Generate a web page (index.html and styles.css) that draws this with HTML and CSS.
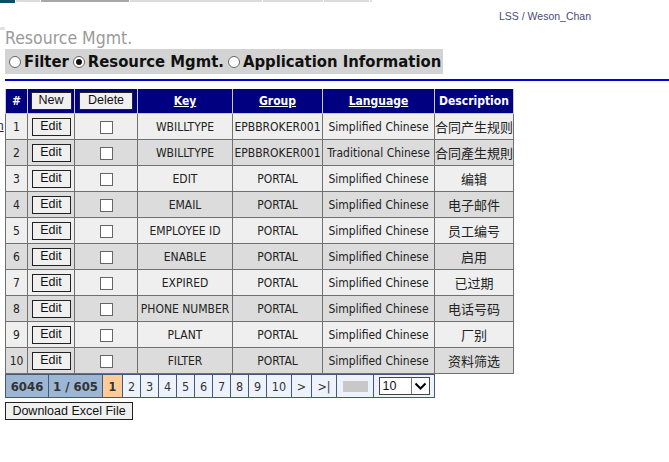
FILE: index.html
```html
<!DOCTYPE html>
<html>
<head>
<meta charset="utf-8">
<link rel="stylesheet" href="styles.css">
</head>
<body>
<div class="topbar">
  <span class="seg s1"></span><span class="seg s2"></span><span class="seg s3"></span><span class="seg s4"></span><span class="seg s5"></span><span class="seg s6"></span><span class="seg s7"></span>
</div>
<div class="userline"><span class="user">LSS / Weson_Chan</span></div>
<div class="page">
  <span class="stub"></span>
  <a class="stray" href="#">n</a>
  <h1 class="title">Resource Mgmt.</h1>
  <div class="radios">
    <label class="opt"><span class="radio"></span>Filter</label>
    <label class="opt"><span class="radio on"></span>Resource Mgmt.</label>
    <label class="opt"><span class="radio"></span>Application Information</label>
  </div>
  <div class="rule"></div>
  <table class="grid">
    <colgroup>
      <col class="c-num"><col class="c-edit"><col class="c-del"><col class="c-key"><col class="c-group"><col class="c-lang"><col class="c-desc">
    </colgroup>
    <thead>
      <tr>
        <th>#</th>
        <th><span class="btn hbtn">New</span></th>
        <th><span class="btn hbtn wide">Delete</span></th>
        <th><a href="#">Key</a></th>
        <th><a href="#">Group</a></th>
        <th><a href="#">Language</a></th>
        <th>Description</th>
      </tr>
    </thead>
    <tbody>
      <tr class="odd"><td class="num">1</td><td><span class="btn">Edit</span></td><td><span class="cb"></span></td><td>WBILLTYPE</td><td>EPBBROKER001</td><td>Simplified Chinese</td><td class="cjk">合同产生规则</td></tr>
      <tr class="even"><td class="num">2</td><td><span class="btn">Edit</span></td><td><span class="cb"></span></td><td>WBILLTYPE</td><td>EPBBROKER001</td><td>Traditional Chinese</td><td class="cjk tc">合同產生規則</td></tr>
      <tr class="odd"><td class="num">3</td><td><span class="btn">Edit</span></td><td><span class="cb"></span></td><td>EDIT</td><td>PORTAL</td><td>Simplified Chinese</td><td class="cjk">编辑</td></tr>
      <tr class="even"><td class="num">4</td><td><span class="btn">Edit</span></td><td><span class="cb"></span></td><td>EMAIL</td><td>PORTAL</td><td>Simplified Chinese</td><td class="cjk">电子邮件</td></tr>
      <tr class="odd"><td class="num">5</td><td><span class="btn">Edit</span></td><td><span class="cb"></span></td><td>EMPLOYEE ID</td><td>PORTAL</td><td>Simplified Chinese</td><td class="cjk">员工编号</td></tr>
      <tr class="even"><td class="num">6</td><td><span class="btn">Edit</span></td><td><span class="cb"></span></td><td>ENABLE</td><td>PORTAL</td><td>Simplified Chinese</td><td class="cjk">启用</td></tr>
      <tr class="odd"><td class="num">7</td><td><span class="btn">Edit</span></td><td><span class="cb"></span></td><td>EXPIRED</td><td>PORTAL</td><td>Simplified Chinese</td><td class="cjk">已过期</td></tr>
      <tr class="even"><td class="num">8</td><td><span class="btn">Edit</span></td><td><span class="cb"></span></td><td>PHONE NUMBER</td><td>PORTAL</td><td>Simplified Chinese</td><td class="cjk">电话号码</td></tr>
      <tr class="odd"><td class="num">9</td><td><span class="btn">Edit</span></td><td><span class="cb"></span></td><td>PLANT</td><td>PORTAL</td><td>Simplified Chinese</td><td class="cjk">厂别</td></tr>
      <tr class="even"><td class="num">10</td><td><span class="btn">Edit</span></td><td><span class="cb"></span></td><td>FILTER</td><td>PORTAL</td><td>Simplified Chinese</td><td class="cjk">资料筛选</td></tr>
    </tbody>
  </table>
  <div class="pager">
    <span class="pc total">6046</span>
    <span class="pc total pages">1 / 605</span>
    <span class="pc cur">1</span>
    <span class="pc">2</span><span class="pc">3</span><span class="pc">4</span><span class="pc">5</span><span class="pc">6</span><span class="pc">7</span><span class="pc">8</span><span class="pc">9</span>
    <span class="pc ten">10</span>
    <span class="pc arrow">&gt;</span>
    <span class="pc arrow2">&gt;|</span>
    <span class="pc blank"><span class="greybox"></span></span>
    <span class="pc selcell"><span class="select"><span class="selval">10</span><span class="selbtn"><svg width="13" height="9" viewBox="0 0 13 9"><path d="M1.5 1.5 L6.5 6.5 L11.5 1.5" fill="none" stroke="#000" stroke-width="2"/></svg></span></span></span>
  </div>
  <div class="dl"><span class="btn dlbtn">Download Excel File</span></div>
</div>
</body>
</html>
```
FILE: styles.css
```css
html, body {
  margin: 0;
  padding: 0;
  background: #fff;
}
body {
  font-family: "DejaVu Sans Condensed", "DejaVu Sans", sans-serif;
  font-size: 12px;
  color: #222;
  position: relative;
}
.topbar {
  display: flex;
  height: 3px;
}
.seg { display: block; height: 2px; margin-right: 1px; background: #dcdcdc; }
.s1 { width: 15px; background: #0d4f6a; height: 3px; }
.s2 { width: 24px; }
.s3 { width: 88px; background: #a8a8a8; }
.s4 { width: 132px; }
.s5 { width: 60px; }
.s6 { width: 45px; }
.s7 { width: 2px; }
.userline {
  display: flex;
  padding-left: 499px;
  height: 24px;
  align-items: center;
}
.user {
  font-family: "Liberation Sans", Arial, sans-serif;
  font-size: 10.5px;
  color: #4a4a78;
  margin-top: 2px;
}
.page {
  padding-left: 5px;
}
.stub {
  position: absolute;
  left: 0;
  top: 27px;
  width: 5px;
  height: 3px;
  background: #e2e2e2;
}
.stray {
  position: absolute;
  left: -3px;
  top: 119px;
  font-family: "Liberation Sans", Arial, sans-serif;
  font-size: 12px;
  color: #1a1a66;
}
.title {
  margin: 0;
  font-weight: normal;
  font-size: 17.5px;
  color: #9a9a9a;
  height: 22px;
  line-height: 23px;
}
.radios {
  display: inline-flex;
  align-items: center;
  background: #d3d3d3;
  height: 25px;
  padding: 0 2px 0 4px;
  gap: 4px;
}
.opt {
  display: inline-flex;
  align-items: center;
  font-weight: bold;
  font-size: 16.5px;
  color: #111;
}
.radio {
  border: 1px solid #666;
  border-radius: 50%;
  background: #fff;
  margin-right: 3px;
  position: relative;
  box-sizing: border-box;
  width: 12px;
  height: 12px;
}
.radio.on::after {
  content: "";
  position: absolute;
  left: 2px;
  top: 2px;
  width: 6px;
  height: 6px;
  border-radius: 50%;
  background: #111;
}
.rule {
  height: 2px;
  background: #0000d8;
  margin-top: 5px;
  margin-bottom: 8px;
}
.grid {
  border-collapse: collapse;
  table-layout: fixed;
  width: 508px;
}
.c-num { width: 22px; }
.c-edit { width: 47px; }
.c-del { width: 63px; }
.c-key { width: 95px; }
.c-group { width: 90px; }
.c-lang { width: 112px; }
.c-desc { width: 79px; }
.grid th {
  background: #000080;
  color: #fff;
  font-weight: bold;
  height: 24px;
  padding: 0;
  border: 1px solid #c8c8d8;
  border-top: none;
  text-align: center;
  font-size: 12px;
}
.grid th a { color: #fff; }
.grid td {
  height: 25px;
  padding: 0;
  border: 1px solid #707070;
  text-align: center;
  white-space: nowrap;
  overflow: hidden;
}
.odd td { background: #efefef; }
.even td { background: #dcdcdc; }
.cjk {
  font-family: "Noto Sans CJK SC", sans-serif;
  font-size: 13px;
}
.cjk.tc { font-family: "Noto Sans CJK TC", sans-serif; }
.btn {
  display: inline-block;
  box-sizing: border-box;
  font-family: "Liberation Sans", Arial, sans-serif;
  font-size: 12.5px;
  color: #111;
  background: #f0f0f0;
  border: 1px solid #222;
  width: 39px;
  height: 18px;
  line-height: 15px;
  text-align: center;
  vertical-align: middle;
}
.hbtn { width: 41px; height: 18px; font-weight: normal; }
.hbtn.wide { width: 54px; }
.cb {
  display: inline-block;
  box-sizing: border-box;
  width: 13px;
  height: 13px;
  border: 1px solid #666;
  background: #fff;
  vertical-align: middle;
}
.pager {
  display: inline-flex;
  border: 1px solid #43597a;
  background: #eef3fb;
  height: 24px;
  box-sizing: border-box;
}
.pc {
  display: flex;
  align-items: center;
  justify-content: center;
  width: 17px;
  border-right: 1px solid #43597a;
  color: #333;
  font-size: 12.5px;
}
.total {
  background: #9db6d4;
  font-weight: bold;
  width: 42px;
  font-size: 13px;
}
.pages { width: 53px; }
.cur { background: #ffcc99; font-weight: bold; width: 19px; }
.ten { width: 24px; }
.arrow { width: 19px; }
.arrow2 { width: 24px; }
.blank { width: 36px; }
.greybox { display: block; width: 25px; height: 11px; background: #c8c8c8; }
.selcell { width: 60px; border-right: none; }
.select {
  display: flex;
  box-sizing: border-box;
  width: 51px;
  height: 18px;
  border: 1px solid #444;
  background: #fff;
  font-family: "Liberation Sans", Arial, sans-serif;
  font-size: 12.5px;
}
.selval { flex: 1; padding-left: 3px; line-height: 16px; color: #111; }
.selbtn {
  width: 17px;
  border-left: 1px solid #777;
  display: flex;
  align-items: center;
  justify-content: center;
}
.dl { margin-top: 4px; line-height: 0; }
.dlbtn { width: 128px; font-size: 12.5px; line-height: 16px; }
```
